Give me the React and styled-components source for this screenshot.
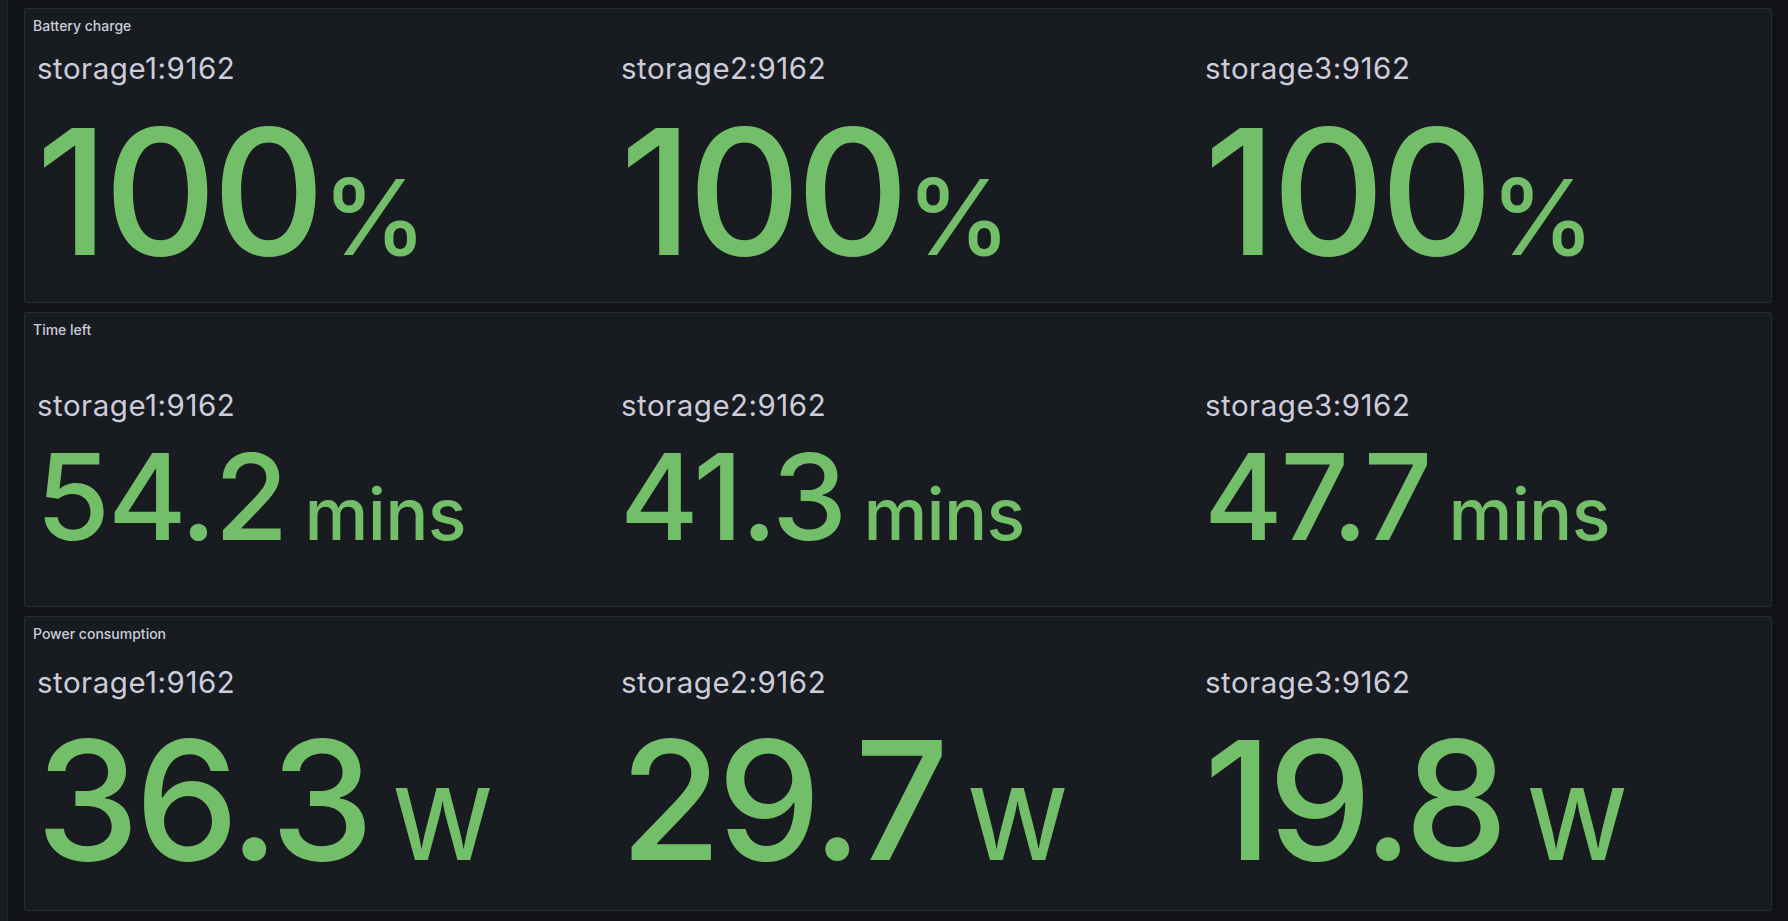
import React from 'react';
import styled, { createGlobalStyle } from 'styled-components';

const GlobalStyle = createGlobalStyle`
  html, body {
    margin: 0;
    padding: 0;
    background: #111217;
    font-family: Inter, "Noto Sans", "Liberation Sans", sans-serif;
    -webkit-font-smoothing: antialiased;
  }
`;

const Page = styled.div`
  display: flex;
  width: 100%;
  height: 921px;
  overflow: hidden;
  background: #111217;
`;

const SideEdge = styled.div`
  width: 7px;
  flex-shrink: 0;
  background: #181b1f;
  border-right: 1px solid #24262c;
`;

const Dashboard = styled.main`
  flex: 1;
  display: flex;
  flex-direction: column;
  gap: 9px;
  padding: 8px 16px 0 16px;
`;

const Panel = styled.section`
  height: 295px;
  box-sizing: border-box;
  display: flex;
  flex-direction: column;
  background: #181b1f;
  border: 1px solid #2a2c31;
  border-radius: 2px;
`;

const PanelHeader = styled.header`
  height: 32px;
  flex-shrink: 0;
  display: flex;
  align-items: center;
  padding: 0 8px;
  color: #ccccdc;
  font-size: 14px;
  font-weight: 500;
`;

const PanelBody = styled.div`
  flex: 1;
  display: grid;
  grid-template-columns: repeat(3, 1fr);
  column-gap: 30px;
  align-items: center;
  padding: 6px 12px 0 12px;
`;

const Stat = styled.div`
  display: flex;
  flex-direction: column;
  min-width: 0;
`;

const StatName = styled.div`
  color: #ccccdc;
  font-size: 29.5px;
  font-weight: 400;
  letter-spacing: 0.5px;
  line-height: 1.21;
  white-space: nowrap;
`;

const StatValue = styled.div`
  color: #73bf69;
  font-size: ${(p) => p.$size}px;
  font-weight: 500;
  letter-spacing: ${(p) => p.$tracking}em;
  line-height: 1.21;
  white-space: nowrap;
  margin-left: -1px;
`;

const Unit = styled.span`
  font-size: 0.6em;
  letter-spacing: -0.01em;
  margin-left: ${(p) => p.$gap}px;
`;

const panels = [
  {
    title: 'Battery charge',
    size: 175,
    tracking: -0.027,
    gap: 2,
    stats: [
      { name: 'storage1:9162', value: '100', unit: '%' },
      { name: 'storage2:9162', value: '100', unit: '%' },
      { name: 'storage3:9162', value: '100', unit: '%' },
    ],
  },
  {
    title: 'Time left',
    size: 120,
    tracking: -0.019,
    gap: 0,
    stats: [
      { name: 'storage1:9162', value: '54.2', unit: ' mins' },
      { name: 'storage2:9162', value: '41.3', unit: ' mins' },
      { name: 'storage3:9162', value: '47.7', unit: ' mins' },
    ],
  },
  {
    title: 'Power consumption',
    size: 165,
    tracking: -0.027,
    gap: -2,
    stats: [
      { name: 'storage1:9162', value: '36.3', unit: ' W' },
      { name: 'storage2:9162', value: '29.7', unit: ' W' },
      { name: 'storage3:9162', value: '19.8', unit: ' W' },
    ],
  },
];

const App = () => {
  return (
    <Page>
      <GlobalStyle />
      <SideEdge />
      <Dashboard>
        {panels.map((panel) => (
          <Panel key={panel.title}>
            <PanelHeader>{panel.title}</PanelHeader>
            <PanelBody>
              {panel.stats.map((s) => (
                <Stat key={s.name}>
                  <StatName>{s.name}</StatName>
                  <StatValue $size={panel.size} $tracking={panel.tracking}>
                    {s.value}
                    <Unit $gap={panel.gap}>{s.unit}</Unit>
                  </StatValue>
                </Stat>
              ))}
            </PanelBody>
          </Panel>
        ))}
      </Dashboard>
    </Page>
  );
};

export default App;
